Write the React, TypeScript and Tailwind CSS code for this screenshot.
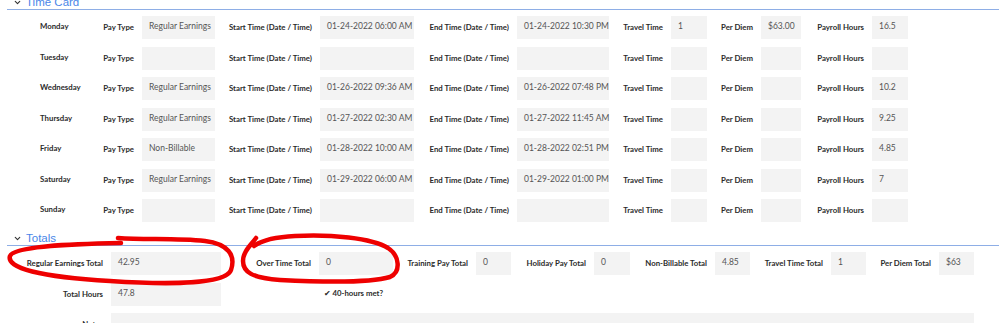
import { ChevronDown } from 'lucide-react'

type DayRow = {
  day: string
  payType?: string
  start?: string
  end?: string
  travel?: string
  perDiem?: string
  payroll?: string
}

const days: DayRow[] = [
  { day: 'Monday', payType: 'Regular Earnings', start: '01-24-2022 06:00 AM', end: '01-24-2022 10:30 PM', travel: '1', perDiem: '$63.00', payroll: '16.5' },
  { day: 'Tuesday' },
  { day: 'Wednesday', payType: 'Regular Earnings', start: '01-26-2022 09:36 AM', end: '01-26-2022 07:48 PM', payroll: '10.2' },
  { day: 'Thursday', payType: 'Regular Earnings', start: '01-27-2022 02:30 AM', end: '01-27-2022 11:45 AM', payroll: '9.25' },
  { day: 'Friday', payType: 'Non-Billable', start: '01-28-2022 10:00 AM', end: '01-28-2022 02:51 PM', payroll: '4.85' },
  { day: 'Saturday', payType: 'Regular Earnings', start: '01-29-2022 06:00 AM', end: '01-29-2022 01:00 PM', payroll: '7' },
  { day: 'Sunday' },
]

// label cell: fixed width, text pushed to the right edge
function Label({ text, className = '' }: { text: string; className?: string }) {
  return (
    <div className={`shrink-0 text-right pr-[8px] pt-[6px] text-[7.8px] leading-[10px] font-bold text-[#2b2b2b] whitespace-nowrap ${className}`}>
      {text}
    </div>
  )
}

function Field({ value, className = '' }: { value?: string; className?: string }) {
  return (
    <div className={`shrink-0 h-[23px] bg-[#f3f3f3] pl-[7px] pt-[5px] text-[8.5px] leading-[10px] text-[#555] whitespace-nowrap ${className}`}>
      {value}
    </div>
  )
}

function SectionHeader({ title, className = '' }: { title: string; className?: string }) {
  return (
    <div className={`ml-[7px] h-[15px] border-b border-[#8eaee6] flex items-center ${className}`}>
      <ChevronDown className="ml-[6px] w-[9px] h-[9px] text-[#333]" strokeWidth={3} />
      <span
        className="ml-[4px] text-[11.5px] leading-[14px] text-[#4a86e8]"
        style={{ fontFamily: '"Liberation Sans", Arial, sans-serif' }}
      >
        {title}
      </span>
    </div>
  )
}

export default function App() {
  return (
    <div
      className="relative w-full h-[323px] overflow-hidden bg-white"
      style={{ fontFamily: 'Lato, "Open Sans", sans-serif' }}
    >
      <SectionHeader title="Time Card" className="-mt-[5px]" />

      <div className="mt-[6px] flex flex-col gap-[7.5px]">
        {days.map((d) => (
          <div key={d.day} className="flex h-[23px]">
            <div className="shrink-0 w-[97px] pl-[40px] pt-[5px] text-[7.8px] leading-[10px] font-bold text-[#2b2b2b]">
              {d.day}
            </div>
            <Label text="Pay Type" className="w-[45px] pr-[7px]" />
            <Field value={d.payType} className="w-[73px]" />
            <Label text="Start Time (Date / Time)" className="w-[105px] pr-[7px]" />
            <Field value={d.start} className="w-[94px]" />
            <Label text="End Time (Date / Time)" className="w-[103px]" />
            <Field value={d.end} className="w-[92px]" />
            <Label text="Travel Time" className="w-[62px]" />
            <Field value={d.travel} className="w-[36px]" />
            <Label text="Per Diem" className="w-[54px]" />
            <Field value={d.perDiem} className="w-[40px] pl-[5px]" />
            <Label text="Payroll Hours" className="w-[71px]" />
            <Field value={d.payroll} className="w-[36px]" />
          </div>
        ))}
      </div>

      <SectionHeader title="Totals" className="mt-[9px]" />

      <div className="mt-[6px] flex h-[23px]">
        <Label text="Regular Earnings Total" className="w-[111px]" />
        <Field value="42.95" className="w-[110px] pl-[6px]" />
        <Label text="Over Time Total" className="w-[98px]" />
        <Field value="0" className="w-[74px] pl-[6px]" />
        <Label text="Training Pay Total" className="w-[83px]" />
        <Field value="0" className="w-[35px] pl-[6px]" />
        <Label text="Holiday Pay Total" className="w-[83px]" />
        <Field value="0" className="w-[36px] pl-[6px]" />
        <Label text="Non-Billable Total" className="w-[85px]" />
        <Field value="4.85" className="w-[35px] pl-[6px]" />
        <Label text="Travel Time Total" className="w-[81px]" />
        <Field value="1" className="w-[35px] pl-[6px]" />
        <Label text="Per Diem Total" className="w-[73px]" />
        <Field value="$63" className="w-[35px] pl-[6px]" />
      </div>

      <div className="mt-[8px] flex h-[23px]">
        <Label text="Total Hours" className="w-[111px]" />
        <Field value="47.8" className="w-[110px] pl-[6px]" />
        <div className="shrink-0 w-[98px]" />
        <div className="pl-[5px] pt-[5px] text-[7.8px] leading-[10px] font-bold text-[#2b2b2b] whitespace-nowrap">
          <span style={{ fontFamily: '"DejaVu Sans", sans-serif' }}>✔</span> 40-hours met?
        </div>
      </div>

      <div className="mt-[7px] flex h-[23px]">
        <Label text="Notes" className="w-[111px]" />
        <Field className="w-[863px]" />
      </div>

      {/* hand-drawn red annotations */}
      <svg className="absolute inset-0 pointer-events-none" width="999" height="323" viewBox="0 0 999 323" fill="none">
        <path
          d="M121 243 C 70 244, 14 246, 10 256 C 6 268, 40 277, 110 281 C 170 285, 226 284, 231 270 C 236 255, 228 244, 205 241 C 175 238, 145 240, 118 238"
          stroke="#ee0000"
          strokeWidth="4.5"
          strokeLinecap="round"
        />
        <path
          d="M256 238 C 250 246, 243 252, 243 261 C 243 272, 252 278, 280 280 C 320 282, 370 283, 390 277 C 401 272, 400 256, 388 248 C 372 238, 330 234, 295 236 C 275 237, 262 240, 254 246"
          stroke="#ee0000"
          strokeWidth="4.5"
          strokeLinecap="round"
        />
      </svg>
    </div>
  )
}
